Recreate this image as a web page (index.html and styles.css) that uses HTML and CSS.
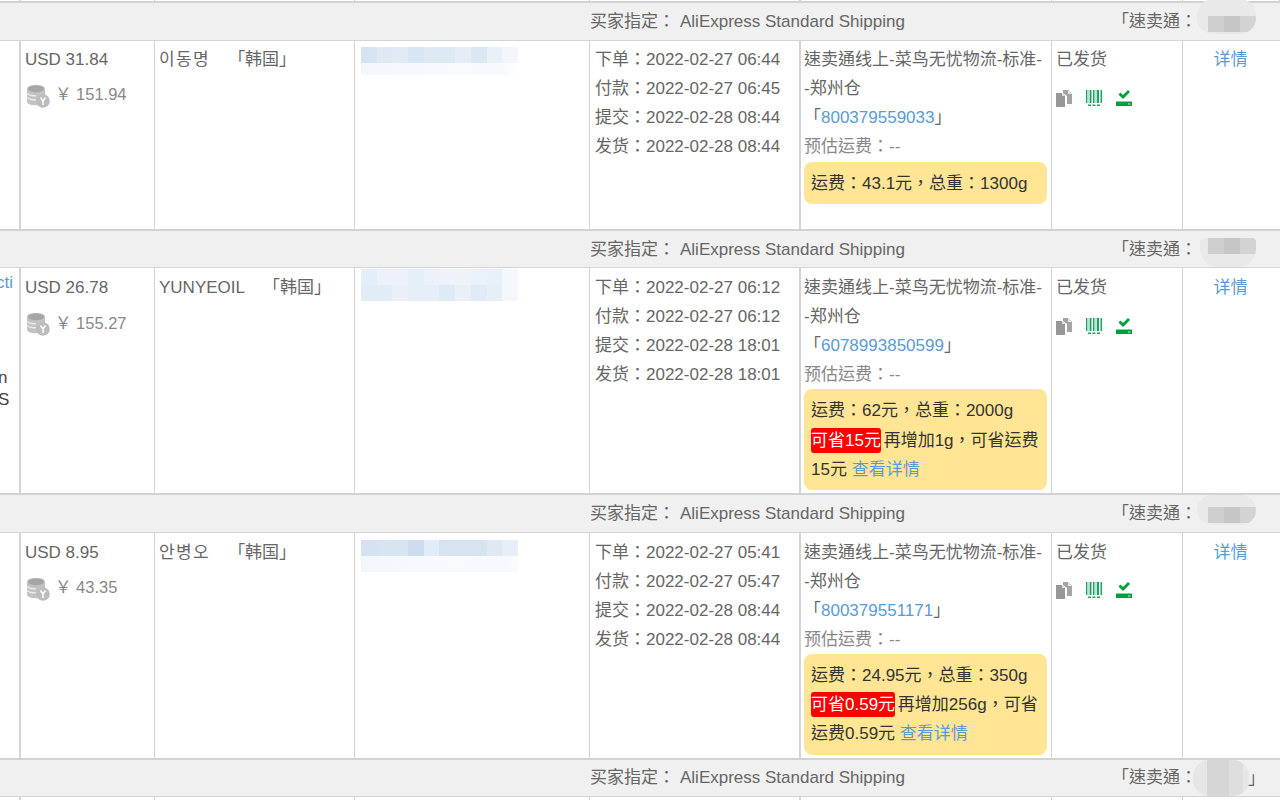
FILE: index.html
```html
<!DOCTYPE html>
<html lang="zh-TW">
<head>
<meta charset="utf-8">
<title>订单列表</title>
<link rel="stylesheet" href="styles.css">
</head>
<body>
<svg class="defs" width="0" height="0" aria-hidden="true">
  <symbol id="coin" viewBox="0 0 24 24">
    <path d="M1 5c0-2.600 3.600-4 9-4s9 1.400 9 4v6a7 7 0 0 0-7 10 12 12 0 0 1-2 .2c-5.400 0-9-1.400-9-4z" fill="#c2c2c2"/>
    <path d="M1 9.500c2 1.800 5 2.400 9 2.400M1 13.500c2 1.800 5 2.400 9 2.400" fill="none" stroke="#ececec" stroke-width="1.200"/>
    <ellipse cx="10" cy="4.800" rx="8" ry="3.400" fill="#a6a6a6"/>
    <circle cx="17" cy="17" r="6.800" fill="#bcbcbc"/>
    <path d="M14.500 13.500l2.500 3.500 2.500-3.500M17 17v4" fill="none" stroke="#fff" stroke-width="1.500"/>
  </symbol>
  <symbol id="copy" viewBox="0 0 18 18">
    <path d="M8 1h5l4 4v10h-5V7L8 4z" fill="#a4a4a4"/>
    <path d="M1 4h6l3 3v11H1z" fill="#979797"/>
    <path d="M7 4v3h3z" fill="#e4e4e4"/>
    <path d="M13 1v4h4z" fill="#e4e4e4"/>
  </symbol>
  <symbol id="barcode" viewBox="0 0 18 18">
    <path d="M1 1h1.500v13H1zM4.500 1h2v13h-2zM8 1h1.500v13H8zM12 1h2v13h-2zM15.500 1H17v13h-1.500z" fill="#1ba562"/>
    <path d="M2.500 1h2v13h-2zM10 1h2v13h-2z" fill="#c3e0d0"/>
    <path d="M3 15.500h3V17H3zM7.500 15.500h3V17h-3zM12 15.500h3V17h-3z" fill="#1ba562"/>
  </symbol>
  <symbol id="ship" viewBox="0 0 18 18">
    <path d="M3.500 5.500l2-2 2.500 2.500L13 1l2 2-7 7z" fill="#009e3c"/>
    <path d="M1 12.500h16V17H1z" fill="#009e3c"/>
    <path d="M13 15h2.500" stroke="#bfe8cc" stroke-width="1"/>
  </symbol>
</svg>
<main class="page">
  <div class="stub"><i class="c0"></i><i class="c1"></i><i class="c2"></i><i class="c3"></i><i class="c4"></i><i class="c5"></i><i class="c6"></i><i class="c7"></i></div>

  <section class="order">
    <header class="band"><span class="buyer">买家指定：</span><span class="method">AliExpress Standard Shipping</span><span class="carrier">「速卖通：</span><span class="smear-band s1"></span></header>
    <div class="row first">
      <div class="cell c0"></div>
      <div class="cell c1"><p>USD 31.84</p><p class="cny"><svg class="coin"><use href="#coin"/></svg><span>￥ 151.94</span></p></div>
      <div class="cell c2"><span class="name ko">이동명</span><span class="country">「韩国」</span></div>
      <div class="cell c3"><div class="smear sa"></div></div>
      <div class="cell c4"><p>下单：2022-02-27 06:44</p><p>付款：2022-02-27 06:45</p><p>提交：2022-02-28 08:44</p><p>发货：2022-02-28 08:44</p></div>
      <div class="cell c5"><p>速卖通线上-菜鸟无忧物流-标准-<br>-郑州仓</p><p>「<a>800379559033</a>」</p><p class="est">预估运费：--</p><div class="fee">运费：43.1元，总重：1300g</div></div>
      <div class="cell c6"><p>已发货</p><div class="icons"><svg><use href="#copy"/></svg><svg><use href="#barcode"/></svg><svg><use href="#ship"/></svg></div></div>
      <div class="cell c7"><a>详情</a></div>
    </div>
  </section>

  <section class="order">
    <header class="band"><span class="buyer">买家指定：</span><span class="method">AliExpress Standard Shipping</span><span class="carrier">「速卖通：</span><span class="smear-band s2"></span></header>
    <div class="row">
      <div class="cell c0"><p class="cut link-cut">cti</p><p class="cut low">n</p><p class="cut">S</p></div>
      <div class="cell c1"><p>USD 26.78</p><p class="cny"><svg class="coin"><use href="#coin"/></svg><span>￥ 155.27</span></p></div>
      <div class="cell c2"><span class="name">YUNYEOIL</span><span class="country">「韩国」</span></div>
      <div class="cell c3"><div class="smear sb"></div></div>
      <div class="cell c4"><p>下单：2022-02-27 06:12</p><p>付款：2022-02-27 06:12</p><p>提交：2022-02-28 18:01</p><p>发货：2022-02-28 18:01</p></div>
      <div class="cell c5"><p>速卖通线上-菜鸟无忧物流-标准-<br>-郑州仓</p><p>「<a>6078993850599</a>」</p><p class="est">预估运费：--</p><div class="fee">运费：62元，总重：2000g<br><b>可省15元</b> 再增加1g，可省运费<br>15元 <a>查看详情</a></div></div>
      <div class="cell c6"><p>已发货</p><div class="icons"><svg><use href="#copy"/></svg><svg><use href="#barcode"/></svg><svg><use href="#ship"/></svg></div></div>
      <div class="cell c7"><a>详情</a></div>
    </div>
  </section>

  <section class="order">
    <header class="band"><span class="buyer">买家指定：</span><span class="method">AliExpress Standard Shipping</span><span class="carrier">「速卖通：</span><span class="smear-band s3"></span></header>
    <div class="row">
      <div class="cell c0"></div>
      <div class="cell c1"><p>USD 8.95</p><p class="cny"><svg class="coin"><use href="#coin"/></svg><span>￥ 43.35</span></p></div>
      <div class="cell c2"><span class="name ko">안병오</span><span class="country">「韩国」</span></div>
      <div class="cell c3"><div class="smear sc"></div></div>
      <div class="cell c4"><p>下单：2022-02-27 05:41</p><p>付款：2022-02-27 05:47</p><p>提交：2022-02-28 08:44</p><p>发货：2022-02-28 08:44</p></div>
      <div class="cell c5"><p>速卖通线上-菜鸟无忧物流-标准-<br>-郑州仓</p><p>「<a>800379551171</a>」</p><p class="est">预估运费：--</p><div class="fee">运费：24.95元，总重：350g<br><b>可省0.59元</b> 再增加256g，可省<br>运费0.59元 <a>查看详情</a></div></div>
      <div class="cell c6"><p>已发货</p><div class="icons"><svg><use href="#copy"/></svg><svg><use href="#barcode"/></svg><svg><use href="#ship"/></svg></div></div>
      <div class="cell c7"><a>详情</a></div>
    </div>
  </section>

  <section class="order">
    <header class="band"><span class="buyer">买家指定：</span><span class="method">AliExpress Standard Shipping</span><span class="carrier">「速卖通：</span><span class="close">」</span><span class="smear-band s4"></span></header>
    <div class="row tail">
      <div class="cell c0"></div><div class="cell c1"></div><div class="cell c2"></div><div class="cell c3"></div><div class="cell c4"></div><div class="cell c5"></div><div class="cell c6"></div><div class="cell c7"></div>
    </div>
  </section>
</main>
</body>
</html>
```

FILE: styles.css
```css
* { box-sizing: border-box; }
html, body { margin: 0; height: 800px; overflow: hidden; background: #fff; }
body {
  font-family: "Liberation Sans", "Noto Sans CJK TC", sans-serif;
  font-size: 17px;
  line-height: 29.1px;
  color: #666;
}
p { margin: 0; }
a { color: #5b9bd5; }
.defs { position: absolute; }

.stub, .row {
  display: grid;
  grid-template-columns: 21px 134px 200px 235px 211px 251px 131px 97px;
}
.stub { height: 1.2px; overflow: hidden; }
.stub i { display: block; border-right: 1px solid #d4d4d4; }
.stub .c0, .stub .c4 { border-right-width: 2px; }

.band {
  position: relative;
  display: flex;
  align-items: center;
  height: 39.4px;
  padding: 0 0 0 590px;
  background: #f0f0f0;
  border-top: 2px solid #d2d2d2;
  border-bottom: 1px solid #d4d4d4;
  white-space: nowrap;
}
.buyer { width: 90px; }
.carrier { margin-left: 207px; }
.close { position: absolute; left: 1248px; top: 4px; }

.row { height: 225.1px; }
.row.first { height: 188.3px; }
.row.tail { height: 10px; }
.cell {
  border-right: 1px solid #d4d4d4;
  padding: 4.9px 4px 0;
  min-width: 0;
}
.first .cell { padding-top: 4.4px; }
.cell.c0, .cell.c4 { border-right-width: 2px; }
.cell.c0 { padding: 0; overflow: hidden; color: #444; }
.cell.c7 { border-right: 0; padding-right: 6px; text-align: center; }

.cut { white-space: nowrap; line-height: 22px; margin-left: -2px; }
.cut.link-cut { margin: 4px 0 0 -4px; color: #5b9bd5; }
.cut.low { margin-top: 73px; }

.cny { display: flex; align-items: center; margin-top: 6.4px; font-size: 16.5px; color: #888; }
.coin { width: 24px; height: 24px; margin: 2px 5px 0 1px; flex: none; }
.name { display: inline-block; margin-right: 18px; }
.ko { letter-spacing: 1.4px; }
.c3.cell { padding: 0; }
.c4.cell { padding-left: 5px; padding-right: 0; }
.c5.cell { padding-left: 3px; padding-right: 4px; }
.est { color: #888; }

.fee {
  margin-top: -0.2px;
  padding: 7px 7px 6px;
  line-height: 29.3px;
  border-radius: 8px;
  background: #ffe594;
  color: #333;
  white-space: nowrap;
}
.first .fee { margin-top: 0.8px; }
.fee b {
  font-weight: 400;
  color: #fff;
  background: #f00;
  border-radius: 3px;
  padding: 3px 0;
  margin-right: -2px;
}
.icons { display: flex; gap: 12px; margin: 14.5px 0 0 -1px; }
.icons svg { width: 18px; height: 18px; display: block; }

.smear {
  width: 157px;
  margin-left: 6px;
  filter: blur(0.7px);
  background-repeat: no-repeat;
}
.sa {
  height: 28px;
  margin-top: 6.4px;
  background-image:
    linear-gradient(90deg, #d5e4f2 0 10%, #dfe8f3 10% 20%, #e1ebf5 20% 30%, #d8e6f3 30% 40%, #dfe9f4 40% 60%, #e6edf6 60% 70%, #dde7f3 70% 80%, #eaf0f8 80% 90%, #f3f7fb 90%),
    linear-gradient(90deg, #f3f7fb, #f8fafd 60%, #f7f9fc 90%, #fff);
  background-size: 100% 16px, 100% 12px;
  background-position: 0 0, 0 16px;
}
.sb {
  height: 32px;
  margin-top: 1px;
  background-image:
    linear-gradient(90deg, #e4eef8 0 10%, #ecf2f7 10% 20%, #edf2fa 20% 30%, #e5eff7 30% 40%, #edf2fa 40% 50%, #eef3fa 50% 70%, #ebf1f9 70% 80%, #e8f0f9 80% 90%, #f4f8fc 90%),
    linear-gradient(90deg, #e2ecf7 0 20%, #ebf0f8 20% 30%, #e6eef7 30% 50%, #deeaf5 50% 60%, #ebf0f7 60% 70%, #e0ebf6 70% 80%, #e6eef6 80% 90%, #f4f8fc 90%);
  background-size: 100% 16px, 100% 16px;
  background-position: 0 0, 0 16px;
}
.sc {
  height: 32px;
  margin-top: 7.2px;
  background-image:
    linear-gradient(90deg, #d4e3f2 0 10%, #d8e4f2 10% 30%, #cddcee 30% 40%, #e2ecf6 40% 50%, #d6e4f2 50% 80%, #e0e8f3 80% 90%, #e6eef7 90%),
    linear-gradient(90deg, #f3f7fc, #f8fafd 60%, #f6f9fd 90%, #fafcfe);
  background-size: 100% 16px, 100% 16px;
  background-position: 0 0, 0 16px;
}

.smear-band {
  position: absolute;
  left: 1197px;
  width: 59px;
  border-radius: 16px;
  filter: blur(0.7px);
  background-color: #e9e9e9;
  background-repeat: no-repeat;
  background-image: linear-gradient(90deg, #cfcfcf 0 33%, #c6c6c6 33% 66%, #d3d3d3 66%);
  background-size: 48px 16px;
}
.s1 { top: -4px; height: 35px; background-position: 11px 17px; }
.s2 { left: 1200px; width: 56px; top: 7px; height: 29px; background-position: 8px 0; border-radius: 4px 4px 18px 18px; }
.s3 { top: 0; height: 30px; background-position: 11px 12px; }
.s4 { left: 1193px; width: 56px; top: 0; height: 36px; background-color: #e6e6e6; background-image: linear-gradient(90deg, #d6d6d6 0 60%, #dedede 60%); background-size: 36px 36px; background-position: 14px 0; }
```
